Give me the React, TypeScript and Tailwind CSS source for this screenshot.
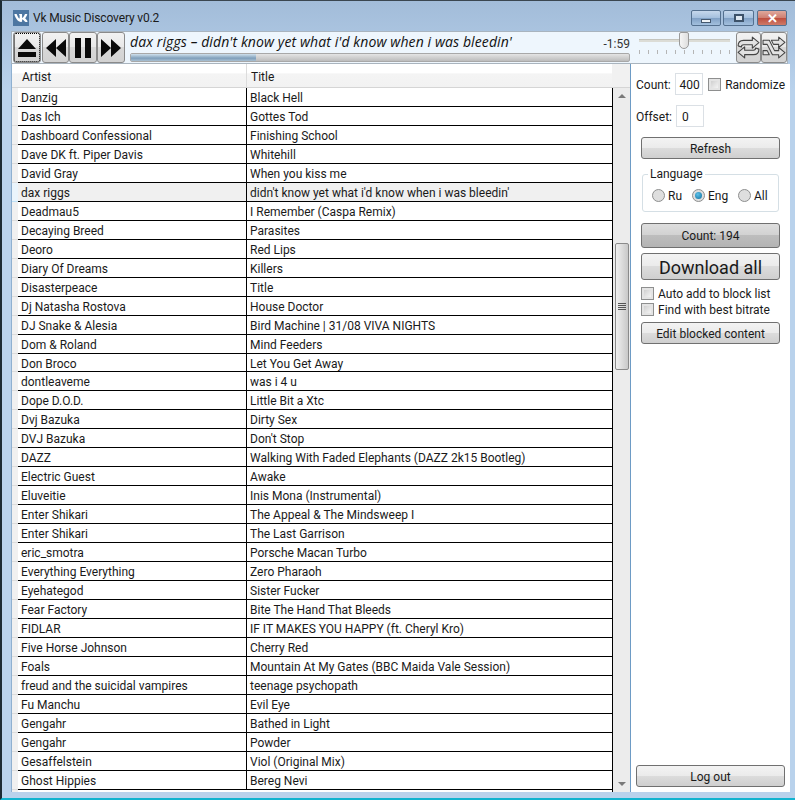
import { ReactNode } from "react";
import { FaVk } from "react-icons/fa";

const rows = [
  ["Danzig", "Black Hell"],
  ["Das Ich", "Gottes Tod"],
  ["Dashboard Confessional", "Finishing School"],
  ["Dave DK ft. Piper Davis", "Whitehill"],
  ["David Gray", "When you kiss me"],
  ["dax riggs", "didn't know yet what i'd know when i was bleedin'"],
  ["Deadmau5", "I Remember (Caspa Remix)"],
  ["Decaying Breed", "Parasites"],
  ["Deoro", "Red Lips"],
  ["Diary Of Dreams", "Killers"],
  ["Disasterpeace", "Title"],
  ["Dj Natasha Rostova", "House Doctor"],
  ["DJ Snake & Alesia", "Bird Machine | 31/08 VIVA NIGHTS"],
  ["Dom & Roland", "Mind Feeders"],
  ["Don Broco", "Let You Get Away"],
  ["dontleaveme", "was i 4 u"],
  ["Dope D.O.D.", "Little Bit a Xtc"],
  ["Dvj Bazuka", "Dirty Sex"],
  ["DVJ Bazuka", "Don't Stop"],
  ["DAZZ", "Walking With Faded Elephants (DAZZ 2k15 Bootleg)"],
  ["Electric Guest", "Awake"],
  ["Eluveitie", "Inis Mona (Instrumental)"],
  ["Enter Shikari", "The Appeal & The Mindsweep I"],
  ["Enter Shikari", "The Last Garrison"],
  ["eric_smotra", "Porsche Macan Turbo"],
  ["Everything Everything", "Zero Pharaoh"],
  ["Eyehategod", "Sister Fucker"],
  ["Fear Factory", "Bite The Hand That Bleeds"],
  ["FIDLAR", "IF IT MAKES YOU HAPPY (ft. Cheryl Kro)"],
  ["Five Horse Johnson", "Cherry Red"],
  ["Foals", "Mountain At My Gates (BBC Maida Vale Session)"],
  ["freud and the suicidal vampires", "teenage psychopath"],
  ["Fu Manchu", "Evil Eye"],
  ["Gengahr", "Bathed in Light"],
  ["Gengahr", "Powder"],
  ["Gesaffelstein", "Viol (Original Mix)"],
  ["Ghost Hippies", "Bereg Nevi"],
];

const btnBg =
  "bg-[linear-gradient(#f3f3f3,#ebebeb_48%,#dcdcdc_50%,#cfcfcf)] border border-[#707070] rounded-[3px]";

function Btn({ children, className }: { children: ReactNode; className: string }) {
  return <div className={`${btnBg} flex items-center justify-center pt-px text-[#1a1a1a] ${className}`}>{children}</div>;
}

function ToolBtn({ children, className }: { children: ReactNode; className: string }) {
  return (
    <div className={`bg-[linear-gradient(#f2f2f2,#e8e8e8_48%,#d8d8d8_50%,#d2d2d2)] border border-[#8a8a8a] rounded-[3px] flex items-center justify-center h-[31px] ${className}`}>
      {children}
    </div>
  );
}

function Check() {
  return (
    <div className="w-[13px] h-[13px] border border-[#8e8f8f] bg-[#e4e4e4] p-[2px] shrink-0">
      <div className="w-full h-full bg-[linear-gradient(135deg,#d0d0d0,#f4f4f4)]" />
    </div>
  );
}

function Radio({ label, checked, className }: { label: string; checked?: boolean; className: string }) {
  return (
    <div className={`flex items-center gap-[3px] ${className}`}>
      <div className="w-[13px] h-[13px] rounded-full border border-[#8e8f8f] bg-[#dedede] flex items-center justify-center">
        {checked && <div className="w-[7px] h-[7px] rounded-full bg-[radial-gradient(circle_at_40%_35%,#5cc0e8,#0f6e9e)]" />}
      </div>
      <span className="pt-px">{label}</span>
    </div>
  );
}

function CaptionBtn({ children, className }: { children: ReactNode; className: string }) {
  return (
    <div className={`h-[16px] border border-[#54708f] rounded-[2px] flex items-center justify-center ${className}`}>
      {children}
    </div>
  );
}

export default function App() {
  return (
    <div className="w-[795px] h-[800px] overflow-hidden flex flex-col bg-[linear-gradient(#a2bcd9,#b9d2ec_90px)] border-t border-t-[#3a4650] border-l-2 border-l-[#1c2a33] border-b-2 border-b-[#11b3cf] font-['Roboto',sans-serif] text-[12px] text-[#1a1a1a]">
      {/* Title bar */}
      <div className="h-[30px] flex items-start pl-[11px] pr-[8px] pt-[9px] shrink-0">
        <div className="w-[16px] h-[16px] bg-[#4d76a1] flex items-center justify-center text-white">
          <FaVk className="w-[14px] h-[14px]" />
        </div>
        <span className="ml-[4px] leading-[17px] text-[#1b1b1b] tracking-[-0.15px]">Vk Music Discovery v0.2</span>
        <div className="ml-auto flex">
          <CaptionBtn className="w-[30px] bg-[linear-gradient(#c6d8ec,#a5c0de_48%,#7f9fc4_50%,#a3c0de)]">
            <div className="w-[10px] h-[4px] mt-[5px] bg-[#eef2f6] border border-[#44586e]" />
          </CaptionBtn>
          <CaptionBtn className="w-[31px] ml-[2px] bg-[linear-gradient(#c6d8ec,#a5c0de_48%,#7f9fc4_50%,#a3c0de)]">
            <div className="w-[10px] h-[8px] border-2 border-[#3d5269] bg-[#dfe8f1]" />
          </CaptionBtn>
          <CaptionBtn className="w-[30px] ml-[3px] border-[#6d3a36] bg-[linear-gradient(#dfa89c,#cf7f72_48%,#bd4c3d_50%,#cf7a68)]">
            <span className="text-white font-bold text-[13px] leading-none font-['Liberation_Sans',sans-serif]">✕</span>
          </CaptionBtn>
        </div>
      </div>

      {/* Player toolbar */}
      <div className="h-[33px] ml-[9px] mr-[7px] shrink-0 flex bg-[#eef6fd] border border-[#a9b4be] pl-[1px]">
        <ToolBtn className="w-[28px] border-[#1fb3cf] outline-1 outline-dotted outline-black -outline-offset-2">
          <svg width="22" height="22" viewBox="0 0 22 22">
            <path d="M11 2 L20 12 H2 Z M2 15 H20 V20 H2 Z" fill="#0a0a0a" />
          </svg>
        </ToolBtn>
        <ToolBtn className="w-[27px] ml-[1px]">
          <svg width="22" height="22" viewBox="0 0 22 22">
            <path d="M11 2 V20 L1 11 Z M21 2 V20 L11 11 Z" fill="#0a0a0a" />
          </svg>
        </ToolBtn>
        <ToolBtn className="w-[28px]">
          <svg width="18" height="22" viewBox="0 0 18 22">
            <path d="M1 1 H7 V21 H1 Z M11 1 H17 V21 H11 Z" fill="#0a0a0a" />
          </svg>
        </ToolBtn>
        <ToolBtn className="w-[28px]">
          <svg width="22" height="22" viewBox="0 0 22 22">
            <path d="M1 2 V20 L11 11 Z M11 2 V20 L21 11 Z" fill="#0a0a0a" />
          </svg>
        </ToolBtn>

        <div className="w-[500px] ml-[5px] flex flex-col shrink-0">
          <div className="h-[21px] flex items-center justify-between">
            <span className="italic text-[14px] -mt-[2px] font-['Open_Sans',sans-serif] text-[#111] tracking-[0.1px] whitespace-nowrap">
              dax riggs – didn't know yet what i'd know when i was bleedin'
            </span>
            <span className="text-[#333] mt-[2px]">-1:59</span>
          </div>
          <div className="h-[9px] border border-[#a8a8a8] rounded-[2px] bg-[linear-gradient(#e4e4e4,#bcbcbc)] overflow-hidden">
            <div className="h-full bg-[linear-gradient(#cfe0ec,#7f9fbb_60%,#a9c0d2)]" style={{ width: "25%" }} />
          </div>
        </div>

        {/* Volume slider */}
        <div className="relative w-[91px] ml-[9px] shrink-0">
          <div className="absolute left-0 right-0 top-[7px] h-[3px] bg-[#dcdcd6] border-t border-[#c4c4bd]" />
          <div className="absolute left-[40px] top-0 w-[10px] h-[17px] bg-[linear-gradient(90deg,#f5f5f5,#dedede)] border border-[#9a9a9a] rounded-t-[2px] rounded-b-[5px]" />
          <div className="absolute left-0 right-0 top-[18px] flex justify-between">
            {Array.from({ length: 11 }).map((_, i) => (
              <div key={i} className="w-px h-[4px] bg-[#b5b5b5]" />
            ))}
          </div>
        </div>

        <ToolBtn className="w-[25px] ml-[6px]">
          <svg width="23" height="25" viewBox="1 2 21 21" fill="#e2e2e2" stroke="#444" strokeWidth="1" strokeLinejoin="round">
            <path d="M2 11 C2 7 4 6 7 6 H15 V3 L21 8 L15 13 V10 H7 C6 10 5 10.5 5 12 Z" />
            <path d="M21 14 C21 18 19 19 16 19 H8 V22 L2 17 L8 12 V15 H16 C17 15 18 14.5 18 13 Z" />
          </svg>
        </ToolBtn>
        <ToolBtn className="w-[26px]">
          <svg width="24" height="25" viewBox="1 2 23 22" fill="#e2e2e2" stroke="#444" strokeWidth="1" strokeLinejoin="round">
            <path d="M2 6 H8 L13 16 H17 V13 L23 18 L17 23 V20 H11 L6 10 H2 Z" />
            <path d="M2 16 H6 L8 20 H2 Z M10 6 H17 V3 L23 8 L17 13 V10 H12 Z" />
          </svg>
        </ToolBtn>
      </div>

      <div className="flex-1 min-h-0 flex ml-[9px] mr-[5px] mb-[6px] pt-0 bg-white border-l border-l-[#8fb0d0]">
        {/* Track table */}
        <div className="w-[619px] shrink-0 flex flex-col border-r border-r-[#6d9bc5]">
          <div className="h-[24px] flex shrink-0 bg-[linear-gradient(#ffffff,#ffffff_40%,#f4f4f4_42%,#f2f2f2)] border-b border-[#d5d5d5]">
            <div className="w-[235px] pl-[10px] pt-[2px] flex items-center border-r border-[#dcdcdc]">Artist</div>
            <div className="w-[365px] pl-[4px] pt-[2px] flex items-center">Title</div>
            <div className="flex-1 bg-[#f1f1f1]" />
          </div>
          <div className="flex-1 min-h-0 flex">
            <div className="flex flex-col w-[6px] shrink-0 bg-[#f0f0f0]">
              {rows.map((r, i) => (
                <div
                  key={i}
                  className={`${i === 14 ? "h-[18px]" : "h-[19px]"} shrink-0 border-b ${i === 5 ? "bg-[#eaf4fb] border-[#bfe0f5]" : "border-[#dcdcdc]"}`}
                />
              ))}
            </div>
            <div className="w-[595px] shrink-0 border-r border-black">
              {rows.map((r, i) => (
                <div
                  key={i}
                  className={`flex ${i === 14 ? "h-[18px]" : "h-[19px]"} border-b border-black ${i === 5 ? "bg-[#f0f0f0]" : ""}`}
                >
                  <div className="w-[229px] shrink-0 pl-[3px] border-r border-black leading-[20px] whitespace-nowrap overflow-hidden">{r[0]}</div>
                  <div className="flex-1 pl-[3px] leading-[20px] whitespace-nowrap overflow-hidden">{r[1]}</div>
                </div>
              ))}
            </div>
            {/* Scrollbar */}
            <div className="flex-1 bg-[#ececec] flex flex-col items-center relative">
              <div className="mt-[6px] w-0 h-0 border-x-[4px] border-x-transparent border-b-[4px] border-b-[#7a7a7a]" />
              <div className="absolute left-[2px] right-[1px] top-[155px] h-[127px] bg-[linear-gradient(90deg,#f0f0f0,#dcdcdc_50%,#c8c8c8)] border border-[#8a8a8a] rounded-[2px] flex items-center justify-center">
                <div className="w-[8px] flex flex-col gap-px">
                  <div className="h-px bg-[#555]" />
                  <div className="h-px bg-[#555]" />
                  <div className="h-px bg-[#555]" />
                  <div className="h-px bg-[#555]" />
                </div>
              </div>
              <div className="mt-auto mb-[6px] w-0 h-0 border-x-[4px] border-x-transparent border-t-[4px] border-t-[#7a7a7a]" />
            </div>
          </div>
        </div>

        {/* Side panel */}
        <div className="flex-1 min-w-0 flex flex-col px-[5px] pt-[9px] pb-[5px]">
          <div className="flex items-center h-[22px]">
            <span className="w-[40px] pt-px">Count:</span>
            <div className="w-[28px] h-full border border-[#dbe0e5] flex items-center pl-[3px] pt-px">400</div>
            <div className="ml-[5px]"><Check /></div>
            <span className="ml-[4px] pt-px whitespace-nowrap">Randomize</span>
          </div>
          <div className="flex items-center h-[22px] mt-[10px]">
            <span className="w-[40px] pt-px">Offset:</span>
            <div className="w-[28px] h-full border border-[#dbe0e5] flex items-center pl-[5px] pt-px">0</div>
          </div>

          <div className="mx-[5px] flex flex-col">
            <Btn className="h-[22px] mt-[10px]">Refresh</Btn>
            <div className="relative mt-[15px] mx-[1px] h-[38px] border border-[#d5dfe5] rounded-[3px] flex items-center pt-[4px] pl-[9px]">
              <span className="absolute left-[5px] -top-[9px] bg-white px-[2px] leading-[16px]">Language</span>
              <Radio label="Ru" className="w-[40px]" />
              <Radio label="Eng" checked className="w-[46px]" />
              <Radio label="All" className="w-[40px]" />
            </div>
            <Btn className="h-[25px] mt-[11px] bg-[linear-gradient(#dedede,#d2d2d2_48%,#bdbdbd_50%,#b4b4b4)]!">Count: 194</Btn>
            <Btn className="h-[27px] mt-[5px] text-[18px]">Download all</Btn>
            <div className="flex items-center gap-[4px] h-[15px] mt-[6px]">
              <Check />
              <span className="whitespace-nowrap pt-px">Auto add to block list</span>
            </div>
            <div className="flex items-center gap-[4px] h-[15px] mt-px">
              <Check />
              <span className="whitespace-nowrap pt-px">Find with best bitrate</span>
            </div>
            <Btn className="h-[22px] mt-[5px]">Edit blocked content</Btn>
          </div>

          <Btn className="h-[22px] mt-auto">Log out</Btn>
        </div>
      </div>
    </div>
  );
}
